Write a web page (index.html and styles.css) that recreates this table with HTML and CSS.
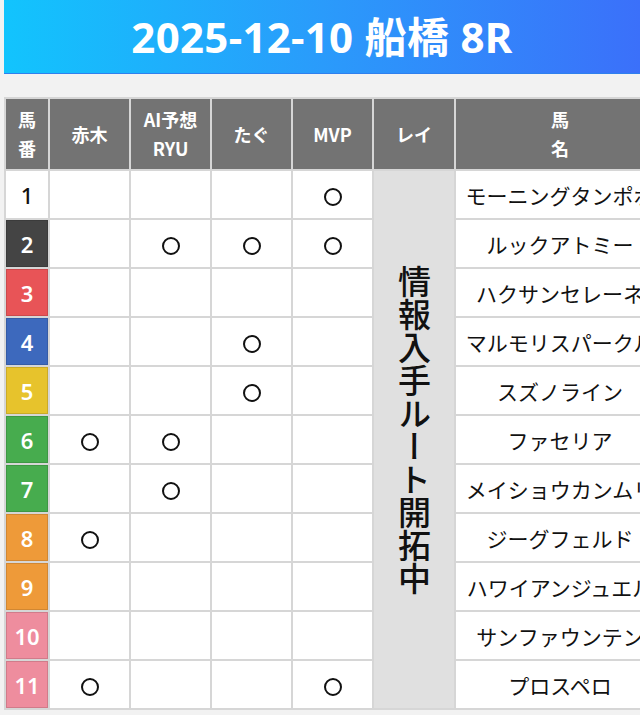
FILE: index.html
```html
<!DOCTYPE html>
<html lang="ja">
<head>
<meta charset="utf-8">
<title>2025-12-10 船橋 8R</title>
<link rel="stylesheet" href="styles.css">
</head>
<body>
<div class="page">
  <header class="banner"><h1 class="title">2025-12-10 船橋 8R</h1></header>
  <table class="grid">
    <thead>
      <tr>
        <th class="c-num">馬<br>番</th>
        <th class="c-p">赤木</th>
        <th class="c-p">AI予想<br>RYU</th>
        <th class="c-p">たぐ</th>
        <th class="c-p">MVP</th>
        <th class="c-rei">レイ</th>
        <th class="c-name">馬<br>名</th>
      </tr>
    </thead>
    <tbody>
      <tr>
        <td class="num n1">1</td><td></td><td></td><td></td><td><span class="mark"></span></td>
        <td class="rei" rowspan="11"><span class="vt">情報入手ルート開拓中</span></td>
        <td class="name">モーニングタンポポ</td>
      </tr>
      <tr>
        <td class="num n2">2</td><td></td><td><span class="mark"></span></td><td><span class="mark"></span></td><td><span class="mark"></span></td>
        <td class="name">ルックアトミー</td>
      </tr>
      <tr>
        <td class="num n3">3</td><td></td><td></td><td></td><td></td>
        <td class="name">ハクサンセレーネ</td>
      </tr>
      <tr>
        <td class="num n4">4</td><td></td><td></td><td><span class="mark"></span></td><td></td>
        <td class="name">マルモリスパークル</td>
      </tr>
      <tr>
        <td class="num n5">5</td><td></td><td></td><td><span class="mark"></span></td><td></td>
        <td class="name">スズノライン</td>
      </tr>
      <tr>
        <td class="num n6">6</td><td><span class="mark"></span></td><td><span class="mark"></span></td><td></td><td></td>
        <td class="name">ファセリア</td>
      </tr>
      <tr>
        <td class="num n7">7</td><td></td><td><span class="mark"></span></td><td></td><td></td>
        <td class="name">メイショウカンムリ</td>
      </tr>
      <tr>
        <td class="num n8">8</td><td><span class="mark"></span></td><td></td><td></td><td></td>
        <td class="name">ジーグフェルド</td>
      </tr>
      <tr>
        <td class="num n9">9</td><td></td><td></td><td></td><td></td>
        <td class="name">ハワイアンジュエル</td>
      </tr>
      <tr>
        <td class="num n10">10</td><td></td><td></td><td></td><td></td>
        <td class="name">サンファウンテン</td>
      </tr>
      <tr>
        <td class="num n11">11</td><td><span class="mark"></span></td><td></td><td></td><td><span class="mark"></span></td>
        <td class="name">プロスペロ</td>
      </tr>
    </tbody>
  </table>
</div>
</body>
</html>
```
FILE: styles.css
```css
html, body {
  margin: 0;
  padding: 0;
  background: #f2f2f2;
}
body {
  font-family: "Noto Sans CJK JP", "Noto Sans", sans-serif;
  color: #111;
  overflow: hidden;
}
.page {
  padding-left: 4px;
  width: 636px;
  overflow: hidden;
}
.banner {
  height: 73px;
  background: linear-gradient(90deg, #12c4fd 0%, #2a9bfb 50%, #3b70fa 100%);
  border-bottom: 1px solid #2f80ee;
  display: flex;
  align-items: center;
  justify-content: center;
}
.title {
  margin: 0;
  color: #fff;
  font-family: "Noto Sans", "Noto Sans CJK JP", sans-serif;
  font-weight: 700;
  font-size: 42px;
  line-height: 1;
  letter-spacing: 0.3px;
}
.grid {
  margin-top: 23px;
  border-collapse: separate;
  border-spacing: 2px;
  background: #d6d6d6;
  table-layout: fixed;
  width: 662px;
}
.grid th {
  background: #737373;
  color: #fff;
  font-weight: 700;
  font-size: 18px;
  line-height: 29px;
  height: 70px;
  padding: 0;
  text-align: center;
  vertical-align: middle;
}
.c-num { width: 42px; }
.c-p { width: 79px; }
.c-rei { width: 80px; }
.c-name { width: 208px; }
.grid td {
  background: #fff;
  height: 47px;
  padding: 0;
  text-align: center;
  vertical-align: middle;
}
.mark {
  display: inline-block;
  width: 18px;
  height: 18px;
  border: 2px solid #111;
  border-radius: 50%;
  box-sizing: border-box;
  vertical-align: middle;
}
.grid td.num {
  font-family: "Noto Sans", sans-serif;
  font-weight: 600;
  font-size: 22px;
  color: #fff;
  box-shadow: inset 0 0 0 1px rgba(0, 0, 0, 0.12);
}
.grid td.n1 { background: #fff; color: #111; box-shadow: none; font-weight: 500; }
.grid td.n2 { background: #444444; }
.grid td.n3 { background: #e85457; }
.grid td.n4 { background: #3d69bd; }
.grid td.n5 { background: #e7c32c; }
.grid td.n6, .grid td.n7 { background: #47ac4e; }
.grid td.n8, .grid td.n9 { background: #ee9a39; }
.grid td.n10, .grid td.n11 { background: #ee8d9e; }
.grid td.rei {
  background: #e0e0e0;
  padding-bottom: 14px;
}
.vt {
  display: inline-block;
  writing-mode: vertical-rl;
  text-orientation: upright;
  font-size: 33px;
  font-weight: 500;
  line-height: 1;
  color: #111;
}
.grid td.name {
  font-size: 21px;
  white-space: nowrap;
  color: #111;
  padding: 0 8px;
}
```
